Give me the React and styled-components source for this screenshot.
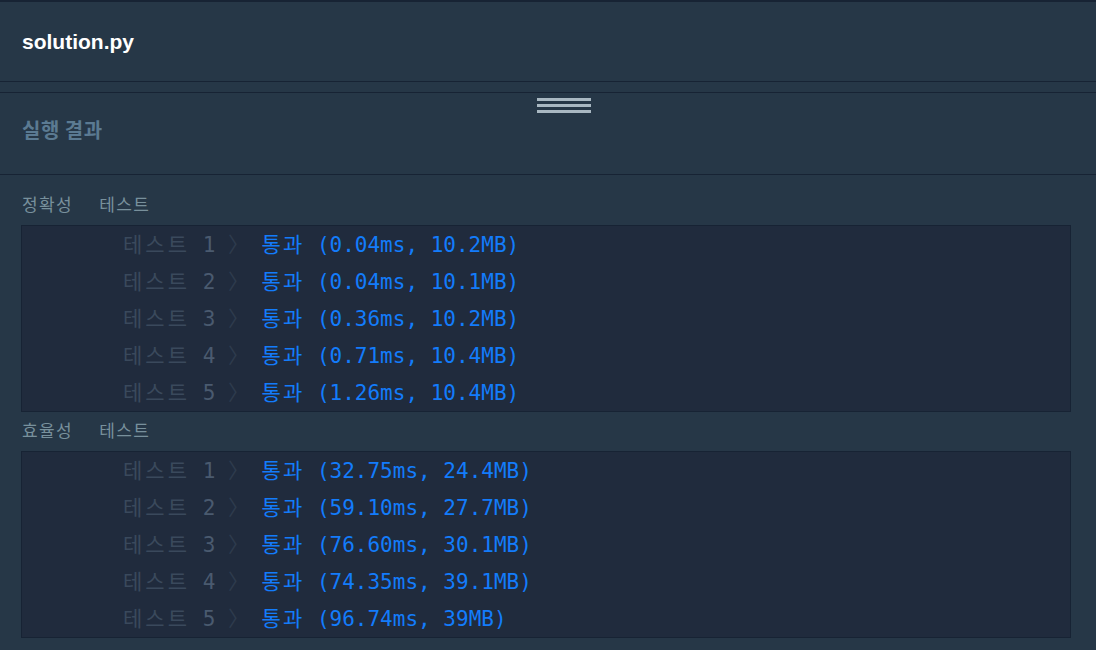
import React from "react";
import styled, { createGlobalStyle } from "styled-components";

const GlobalStyle = createGlobalStyle`
  html, body {
    margin: 0;
    padding: 0;
    background: #263747;
  }
  body {
    font-family: "Liberation Sans", "Noto Sans CJK KR", sans-serif;
  }
`;

const Page = styled.div`
  width: 1096px;
  height: 650px;
  overflow: hidden;
  background: #263747;
`;

const EditorHeader = styled.div`
  height: 79px;
  border-top: 2px solid #172334;
  border-bottom: 1px solid #172334;
  display: flex;
  align-items: center;
  padding: 0 22px;
`;

const FileName = styled.h1`
  margin: 0;
  font-family: "Liberation Sans", Arial, sans-serif;
  font-size: 21px;
  font-weight: 700;
  color: #ffffff;
`;

const Splitter = styled.div`
  height: 10px;
`;

const ResultHeader = styled.div`
  height: 83px;
  box-sizing: border-box;
  border-top: 1px solid #172334;
  border-bottom: 1px solid #172334;
  padding: 5px 22px 0;
  display: flex;
  flex-direction: column;
`;

const Grip = styled.div`
  align-self: center;
  display: flex;
  flex-direction: column;
  gap: 3px;
  width: 54px;
  margin-left: 32px;
`;

const GripBar = styled.span`
  display: block;
  height: 3px;
  background: #a9b8c2;
`;

const Title = styled.h2`
  margin: 3px 0 0;
  font-family: "Noto Sans CJK KR", sans-serif;
  font-size: 20px;
  font-weight: 700;
  letter-spacing: 0.5px;
  line-height: 28px;
  color: #5b7a92;
`;

const Body = styled.div`
  padding: 11px 25px 0 21px;
`;

const GroupLabel = styled.div`
  height: 39px;
  line-height: 39px;
  padding-left: 1px;
  font-family: "DejaVu Sans Mono", "Noto Sans CJK KR", monospace;
  font-size: 17px;
  letter-spacing: 1.3px;
  word-spacing: 15px;
  color: #78909c;
`;

const ResultBox = styled.div`
  background: #202b3d;
  border: 1px solid #172334;
`;

const Row = styled.div`
  height: 37px;
  line-height: 34px;
  padding-left: 101px;
  font-family: "DejaVu Sans Mono", "Noto Sans CJK KR", monospace;
  font-size: 21px;
  white-space: pre;
`;

const Hangul = styled.span`
  letter-spacing: ${(p) => p.$spacing || 3}px;
`;

const Name = styled.span`
  color: #3a495c;
`;

const Num = styled.span`
  color: #4a5a6f;
`;

const Arrow = styled.span`
  color: #2e3b4d;
  font-family: "Noto Sans CJK KR", sans-serif;
`;

const Pass = styled.span`
  color: #137cfb;
`;

const groups = [
  {
    label: "정확성 테스트",
    rows: [
      ["0.04ms", "10.2MB"],
      ["0.04ms", "10.1MB"],
      ["0.36ms", "10.2MB"],
      ["0.71ms", "10.4MB"],
      ["1.26ms", "10.4MB"],
    ],
  },
  {
    label: "효율성 테스트",
    rows: [
      ["32.75ms", "24.4MB"],
      ["59.10ms", "27.7MB"],
      ["76.60ms", "30.1MB"],
      ["74.35ms", "39.1MB"],
      ["96.74ms", "39MB"],
    ],
  },
];

export default function App() {
  return (
    <>
      <GlobalStyle />
      <Page>
        <EditorHeader>
          <FileName>solution.py</FileName>
        </EditorHeader>
        <Splitter />
        <ResultHeader>
          <Grip>
            <GripBar />
            <GripBar />
            <GripBar />
          </Grip>
          <Title>실행 결과</Title>
        </ResultHeader>
        <Body>
          {groups.map((g) => (
            <React.Fragment key={g.label}>
              <GroupLabel>{g.label}</GroupLabel>
              <ResultBox>
                {g.rows.map(([time, mem], i) => (
                  <Row key={i}>
                    <Name>
                      <Hangul>테스트</Hangul> <Num>{i + 1}</Num>
                    </Name>{" "}
                    <Arrow>〉</Arrow>{" "}
                    <Pass>
                      <Hangul $spacing={2}>통과</Hangul> ({time}, {mem})
                    </Pass>
                  </Row>
                ))}
              </ResultBox>
            </React.Fragment>
          ))}
        </Body>
      </Page>
    </>
  );
}
